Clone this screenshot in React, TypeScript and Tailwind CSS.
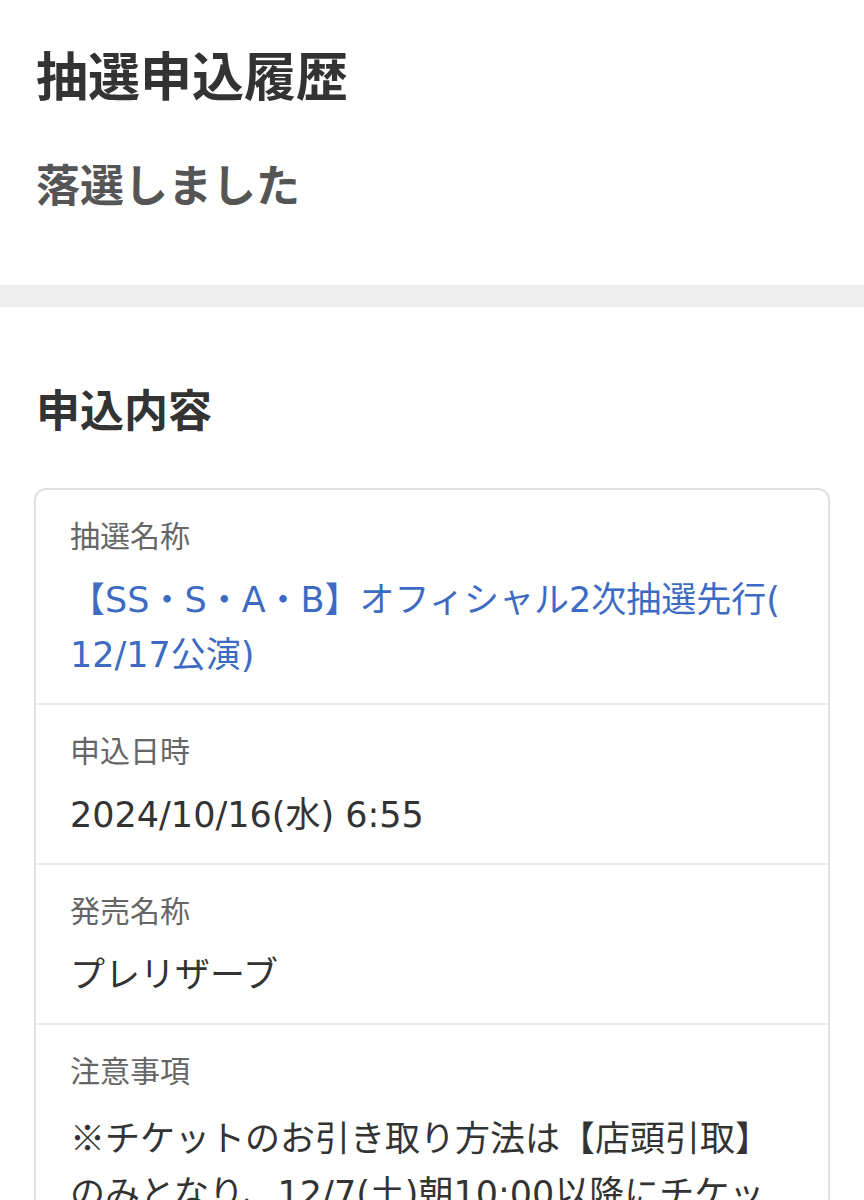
import React from "react";

const jp = { fontFamily: '"Noto Sans CJK JP", "Noto Sans", sans-serif' } as const;

function Row({ label, children, last }: { label: string; children: React.ReactNode; last?: boolean }) {
  return (
    <div className={`px-[34px] pt-[22px] pb-[20px] ${last ? "" : "border-b-2 border-[#ebebeb]"}`}>
      <div className="text-[30px] leading-[45px] text-[#666666]">{label}</div>
      <div className="mt-[16px] font-['DejaVu_Sans','Noto_Sans_CJK_JP',sans-serif] text-[35px] leading-[55px] text-[#333333]">
        {children}
      </div>
    </div>
  );
}

export default function App() {
  return (
    <div className="min-h-[1400px] w-[864px] bg-white" style={jp}>
      <section className="px-[36px] pt-[35px] pb-[69px]">
        <h1 className="text-[52px] font-bold leading-[78px] text-[#333333]">抽選申込履歴</h1>
        <p className="mt-[37px] text-[44px] font-bold leading-[66px] text-[#555555]">落選しました</p>
      </section>
      <div className="h-[22px] bg-[#efefef]" />
      <section className="px-[34px] pt-[68px] pb-[60px]">
        <h2 className="px-[2px] text-[44px] font-bold leading-[66px] text-[#333333]">申込内容</h2>
        <div className="mt-[47px] overflow-hidden rounded-[12px] border-2 border-[#e0e0e0]">
          <Row label="抽選名称">
            <span className="text-[#3d6bc4]">
              【SS・S・A・B】オフィシャル2次抽選先行(
              <br />
              12/17公演)
            </span>
          </Row>
          <Row label="申込日時">2024/10/16(水) 6:55</Row>
          <Row label="発売名称">プレリザーブ</Row>
          <Row label="注意事項" last>
            <span className="font-['Noto_Sans_CJK_JP',sans-serif]">※</span>チケットのお引き取り方法は【店頭引取】
            <br />
            のみとなり、12/7(土)朝10:00以降にチケッ
            <br />
            トをお引き取りいただけます。
          </Row>
        </div>
      </section>
    </div>
  );
}
